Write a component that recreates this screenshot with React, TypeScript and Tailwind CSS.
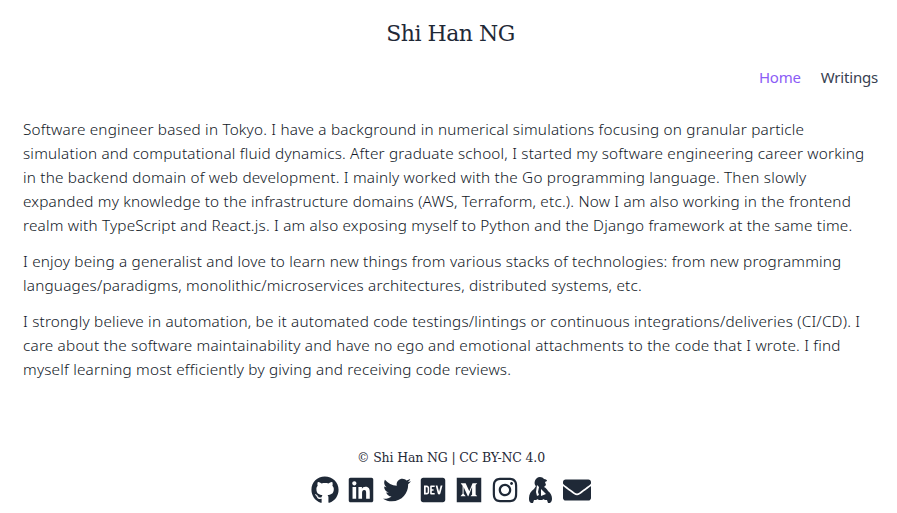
import React from "react";
import { FaDev, FaEnvelope, FaGithub, FaInstagram, FaLinkedin, FaMedium, FaTwitter } from "react-icons/fa";

const sans = "font-['Noto_Sans',sans-serif]";
const serif = "font-['DejaVu_Serif',serif]";

function MascotIcon() {
  return (
    <svg viewBox="0 0 28 28" className="h-[28px] w-[28px]" fill="#1f2937">
      <path d="M10 2c2-2 6-1 7 1 2 0 3 1 3 2l-2 1 1 3-2 2c2 1 3 2 4 4 3 2 4 5 4 8 0 2-1 3-2 4h-2l-1-3H7l-1 3H4c-2-1-2-3-2-5 0-4 2-7 5-9l2-3C7 9 7 4 10 2z" />
      <path d="M10 9l2 2-1 5 1 3-2 1-1-4z" fill="#fff" />
      <path d="M14 13l5 5-5 2z" fill="#fff" />
      <circle cx="10.5" cy="24.5" r="1.2" fill="#fff" />
      <circle cx="16.5" cy="24.5" r="1.2" fill="#fff" />
    </svg>
  );
}

function App() {
  return (
    <div className={`min-h-[513px] bg-white text-[#1f2937] ${sans}`}>
      <header>
        <h1 className={`pt-[18px] pl-[4px] text-center text-[22px] leading-[32px] tracking-[-0.5px] ${serif}`}>Shi Han NG</h1>
        <nav className="mt-[15px] flex justify-end gap-[20px] pr-[19px] text-[15px] leading-[24px] tracking-[-0.2px]">
          <a className="text-[#8b5cf6]">Home</a>
          <a className="text-[#374151]">Writings</a>
        </nav>
      </header>
      <main className="mt-[28px] px-[23px] text-[15.3px] leading-[24px] font-light tracking-[0.2px] text-[#111827] whitespace-nowrap">
        <p>
          Software engineer based in Tokyo. I have a background in numerical simulations focusing on granular particle
          <br />
          simulation and computational fluid dynamics. After graduate school, I started my software engineering career working
          <br />
          in the backend domain of web development. I mainly worked with the Go programming language. Then slowly
          <br />
          expanded my knowledge to the infrastructure domains (AWS, Terraform, etc.). Now I am also working in the frontend
          <br />
          realm with TypeScript and React.js. I am also exposing myself to Python and the Django framework at the same time.
        </p>
        <p className="mt-[12px]">
          I enjoy being a generalist and love to learn new things from various stacks of technologies: from new programming
          <br />
          languages/paradigms, monolithic/microservices architectures, distributed systems, etc.
        </p>
        <p className="mt-[12px]">
          I strongly believe in automation, be it automated code testings/lintings or continuous integrations/deliveries (CI/CD). I
          <br />
          care about the software maintainability and have no ego and emotional attachments to the code that I wrote. I find
          <br />
          myself learning most efficiently by giving and receiving code reviews.
        </p>
      </main>
      <footer className="mt-[65px] pl-[5px] text-center">
        <p className={`text-[12.5px] leading-[24px] tracking-[-0.15px] ${serif}`}>© Shi Han NG | CC BY-NC 4.0</p>
        <div className="mt-[6px] flex justify-center gap-[8px] text-[28px]">
          <FaGithub />
          <FaLinkedin />
          <FaTwitter />
          <FaDev />
          <FaMedium />
          <FaInstagram />
          <MascotIcon />
          <FaEnvelope />
        </div>
      </footer>
    </div>
  );
}

export default App;
